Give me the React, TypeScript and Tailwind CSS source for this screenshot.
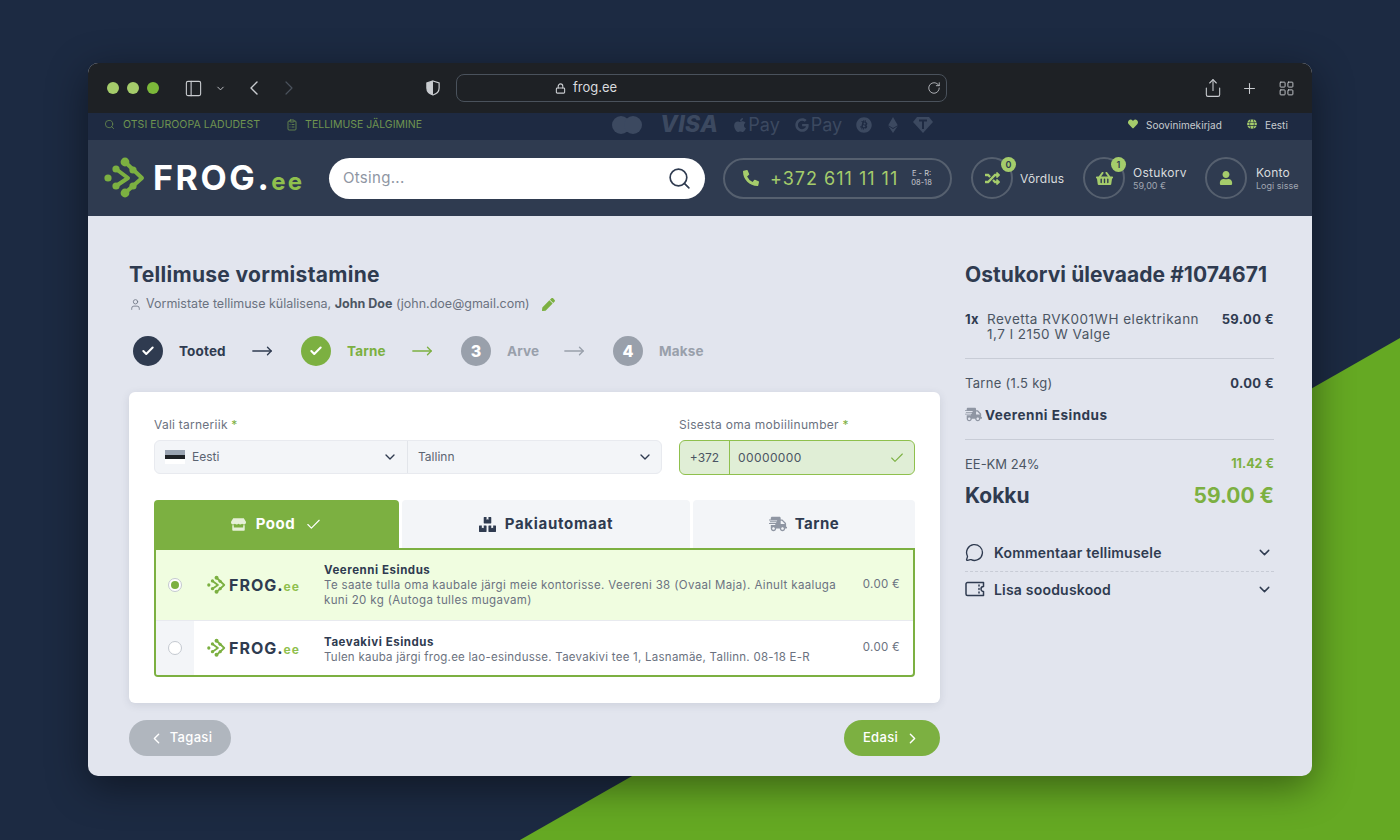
import { Check, ChevronDown, ChevronLeft, ChevronRight, ClipboardList, Lock, MessageCircle, MoveRight, PanelLeft, Plus, RotateCw, Search, Share, User, LayoutGrid } from "lucide-react";
import { FaBitcoin, FaBoxes, FaEthereum, FaGoogle, FaApple, FaHeart, FaPen, FaPhoneAlt, FaRandom, FaShippingFast, FaShoppingBasket, FaStore, FaUser, FaGlobe } from "react-icons/fa";

function LogoMark({ className }: { className: string }) {
  return (
    <svg viewBox="0 0 44 44" className={className} fill="none" stroke="#7cb041" strokeLinecap="round" strokeLinejoin="round">
      <circle cx="4" cy="22" r="3.6" fill="#7cb041" stroke="none" />
      <path d="M12 13 L24 22 L12 30" strokeWidth="4" />
      <path d="M21 6 L38 22 L21 37" strokeWidth="4" />
      <circle cx="12" cy="13" r="3.6" fill="#7cb041" stroke="none" />
      <circle cx="12" cy="30" r="3.6" fill="#7cb041" stroke="none" />
      <circle cx="21" cy="6" r="4.4" fill="#7cb041" stroke="none" />
      <circle cx="21" cy="37" r="4.4" fill="#7cb041" stroke="none" />
      <circle cx="29" cy="14" r="3.6" fill="#7cb041" stroke="none" />
      <circle cx="29" cy="30" r="3.6" fill="#7cb041" stroke="none" />
    </svg>
  );
}

function SmallLogo() {
  return (
    <div className="flex items-center">
      <LogoMark className="w-[20px] h-[20px]" />
      <span className="ml-[2px] text-[16px] leading-none font-bold tracking-[1px] text-[#2f3b50]">FROG.</span>
      <span className="text-[12px] leading-none font-bold tracking-[1px] text-[#8fc04d] mt-[3px]">ee</span>
    </div>
  );
}

function Step({ n, label, state, textWidth, showArrow }: { n: string; label: string; state: "done" | "active" | "todo"; textWidth: string; showArrow: boolean }) {
  const circle = state === "done" ? "bg-[#2f3b50]" : state === "active" ? "bg-[#7cb041]" : "bg-[#99a0ab]";
  const text = state === "done" ? "text-[#2f3b50]" : state === "active" ? "text-[#7cb041]" : "text-[#99a0ab]";
  return (
    <div className="flex items-center">
      <div className={`w-[30px] h-[30px] rounded-full flex items-center justify-center text-white text-[16px] font-extrabold ${circle}`}>
        {state === "todo" ? n : <Check size={14} strokeWidth={3.5} />}
      </div>
      <span className={`ml-4 text-[13.5px] tracking-[0.15px] font-bold whitespace-nowrap ${textWidth} ${text}`}>{label}</span>
      {showArrow && <MoveRight size={22} strokeWidth={1.5} className={`ml-[23px] mr-[28px] ${text}`} />}
    </div>
  );
}

export default function App() {
  return (
    <div className="relative w-[1400px] h-[840px] overflow-hidden bg-[#1c2a42] pt-[63px] px-[88px] [font-family:Inter,sans-serif]">
      {/* green corner behind the window */}
      <svg className="absolute inset-0 w-[1400px] h-[840px]" viewBox="0 0 1400 840">
        <polygon points="1400,338 1400,840 520,840" fill="#65a923" />
      </svg>

      <div className="relative h-[713px] rounded-[10px] overflow-hidden bg-[#e2e5ee] shadow-[0_10px_40px_rgba(0,0,0,0.45)]">
        {/* browser bar */}
        <div className="h-[50px] bg-[#1e2125] flex items-center text-[#c9ccd0] relative">
          <div className="flex items-center gap-2 ml-[19px]">
            <span className="w-3 h-3 rounded-full bg-[#a5cc6b]" />
            <span className="w-3 h-3 rounded-full bg-[#a5cc6b]" />
            <span className="w-3 h-3 rounded-full bg-[#7cb83a]" />
          </div>
          <PanelLeft size={19} strokeWidth={1.4} className="ml-[25px]" />
          <ChevronDown size={11} strokeWidth={2} className="ml-[12px]" />
          <ChevronLeft size={24} strokeWidth={1.4} className="ml-[16px]" />
          <ChevronRight size={24} strokeWidth={1.2} className="ml-[11px] text-[#4a525c]" />
          <svg viewBox="0 0 16 18" className="w-[14px] h-[16px] ml-[125px]">
            <path d="M8 1 L15 3.2 V9 C15 13 12 15.8 8 17 C4 15.8 1 13 1 9 V3.2 Z" fill="none" stroke="#c9ccd0" strokeWidth="1.4" />
            <path d="M8 1 L1 3.2 V9 C1 13 4 15.8 8 17 Z" fill="#c9ccd0" />
          </svg>
          <div className="ml-[16px] w-[491px] h-[28px] rounded-[8px] border border-[#4a525c] flex items-center pl-[98px] relative">
            <Lock size={11} strokeWidth={2.4} className="mr-[7px]" />
            <span className="text-[13px] text-[#d9dbde]">frog.ee</span>
            <RotateCw size={14} strokeWidth={1.4} className="absolute right-[5px] top-[6px]" />
          </div>
          <Share size={20} strokeWidth={1.3} className="ml-[256px]" />
          <Plus size={17} strokeWidth={1.5} className="ml-[18px]" />
          <LayoutGrid size={17} strokeWidth={1.3} className="ml-[20px]" />
        </div>

        {/* top strip */}
        <div className="h-[27px] bg-[#1e2a42] flex items-center pl-[16px] pb-[4px] text-[10.5px] text-[#6f9450] relative">
          <Search size={11} strokeWidth={1.6} />
          <span className="ml-[8px] tracking-[0.05px]">OTSI EUROOPA LADUDEST</span>
          <ClipboardList size={12} strokeWidth={1.6} className="ml-[26px]" />
          <span className="ml-[7px]">TELLIMUSE JÄLGIMINE</span>
          <div className="flex items-center text-[#3c4960] ml-[190px]">
            <div className="flex w-[30px]">
              <span className="w-[18px] h-[18px] rounded-full bg-[#3c4960]" />
              <span className="w-[18px] h-[18px] rounded-full bg-[#3c4960] -ml-[6px]" />
            </div>
            <span className="ml-[18px] text-[23px] tracking-[0.4px] font-extrabold italic leading-none">VISA</span>
            <FaApple size={16} className="ml-[14px]" />
            <span className="text-[18px] leading-none">Pay</span>
            <FaGoogle size={14} className="ml-[15px]" />
            <span className="ml-[2px] text-[18px] leading-none">Pay</span>
            <FaBitcoin size={16} className="ml-[14px]" />
            <FaEthereum size={16} className="ml-[13px]" />
            <svg viewBox="0 0 20 18" className="w-[20px] h-[18px] ml-[12px]">
              <path d="M4 1 H16 L20 6 L10 17 L0 6 Z" fill="#3c4960" />
              <path d="M6 4.5 H14 M10 4.5 V13" stroke="#1e2a42" strokeWidth="2" />
            </svg>
          </div>
          <FaHeart size={10} className="absolute left-[1040px] top-[6px] text-[#a5cc6b]" />
          <span className="absolute left-[1058px] top-[5px] text-[10px] tracking-[0.05px] text-[#c9ccd0]">Soovinimekirjad</span>
          <FaGlobe size={10} className="absolute left-[1159px] top-[6px] text-[#a5cc6b]" />
          <span className="absolute left-[1177px] top-[5px] text-[10px] text-[#c9ccd0]">Eesti</span>
        </div>

        {/* site header */}
        <div className="h-[76px] bg-[#2f3b50] flex items-center pl-[16px]">
          <div className="w-[225px] flex items-center">
            <LogoMark className="w-[44px] h-[44px]" />
            <span className="ml-[5px] text-[34px] leading-none font-bold tracking-[2.6px] text-white">FROG.</span>
            <span className="text-[24px] leading-none font-bold tracking-[2px] text-[#8fc04d] mt-[7px]">ee</span>
          </div>
          <div className="w-[376px] h-[41px] rounded-full bg-white flex items-center justify-between pl-[14px] pr-[13px]">
            <span className="text-[15px] tracking-[0.3px] pt-px text-[#8f96a3]">Otsing...</span>
            <Search size={25} strokeWidth={1.6} className="text-[#2f3b50]" />
          </div>
          <div className="ml-[18px] w-[229px] h-[41px] rounded-full border-2 border-[#56606f] flex items-center pl-[18px]">
            <FaPhoneAlt size={16} className="text-[#a5cc6b]" />
            <span className="ml-[11px] text-[18px] tracking-[1px] pt-px text-[#a5cc6b]">+372 611 11 11</span>
            <span className="ml-[13px] text-[7.5px] leading-[9px] text-center text-[#c9ccd0]">E - R:<br />08-18</span>
          </div>
          <div className="ml-[19px] relative w-[42px] h-[42px] rounded-full border-2 border-[#56606f] flex items-center justify-center text-[#a5cc6b]">
            <FaRandom size={15} />
            <span className="absolute -top-[2px] -right-[5px] w-[15px] h-[15px] rounded-full bg-[#a5cc6b] text-[#2f3b50] text-[9px] font-semibold flex items-center justify-center">0</span>
          </div>
          <span className="ml-[7px] w-[63px] text-[12px] tracking-[0.2px] pt-px text-[#d9dbde]">Võrdlus</span>
          <div className="relative w-[42px] h-[42px] rounded-full border-2 border-[#56606f] flex items-center justify-center text-[#a5cc6b]">
            <FaShoppingBasket size={17} />
            <span className="absolute -top-[2px] right-[-3px] w-[15px] h-[15px] rounded-full bg-[#a5cc6b] text-[#2f3b50] text-[9px] font-semibold flex items-center justify-center">1</span>
          </div>
          <div className="ml-[8px] w-[72px] flex flex-col">
            <span className="text-[12px] leading-[14px] tracking-[0.3px] text-[#d9dbde]">Ostukorv</span>
            <span className="text-[9px] leading-[11px] text-[#a0a6b0]">59,00 €</span>
          </div>
          <div className="w-[42px] h-[42px] rounded-full border-2 border-[#56606f] flex items-center justify-center text-[#a5cc6b]">
            <FaUser size={14} />
          </div>
          <div className="ml-[9px] flex flex-col pt-px">
            <span className="text-[12px] leading-[14px] tracking-[0.2px] text-[#d9dbde]">Konto</span>
            <span className="text-[9px] leading-[11px] text-[#a0a6b0]">Logi sisse</span>
          </div>
        </div>

        {/* page body */}
        <div className="flex pl-[41px] pt-[46px]">
          <div className="w-[811px]">
            <h1 className="text-[21px] leading-[26px] tracking-[0.3px] font-bold text-[#2f3b50]">Tellimuse vormistamine</h1>
            <div className="mt-[8px] flex items-center text-[12.5px] leading-[16px] text-[#6b7280]">
              <User size={13} strokeWidth={1.5} className="mr-[4px]" />
              <span>Vormistate tellimuse külalisena, <b className="font-bold text-[#4b5563]">John Doe</b> (john.doe@gmail.com)</span>
              <FaPen size={13} className="ml-[12px] text-[#7cb041]" />
            </div>

            <div className="mt-[24px] pl-[4px] flex items-center h-[30px]">
              <Step n="1" label="Tooted" state="done" textWidth="w-[49px]" showArrow />
              <Step n="2" label="Tarne" state="active" textWidth="w-[41px]" showArrow />
              <Step n="3" label="Arve" state="todo" textWidth="w-[33px]" showArrow />
              <Step n="4" label="Makse" state="todo" textWidth="w-[46px]" showArrow={false} />
            </div>

            <div className="mt-[26px] h-[311px] rounded-[6px] bg-white shadow-[0_2px_8px_rgba(47,59,80,0.12)] px-[25px] pt-[25px]">
              <div className="flex gap-[17px]">
                <div className="w-[508px]">
                  <div className="text-[12px] leading-[15px] tracking-[0.25px] text-[#6b7280]">Vali tarneriik <span className="text-[#7cb041]">*</span></div>
                  <div className="mt-[8px] h-[34px] rounded-[6px] border border-[#e8eaef] bg-[#f3f5f8] flex items-center text-[12px] text-[#5b6472]">
                    <div className="w-[253px] h-full border-r border-[#e2e5ea] flex items-center pl-[10px] pr-[9px]">
                      <div className="w-[20px] h-[14px] flex flex-col mr-[7px]">
                        <span className="h-1/3 bg-[#9aa4b2]" />
                        <span className="h-1/3 bg-[#1e2125]" />
                        <span className="h-1/3 bg-white" />
                      </div>
                      <span>Eesti</span>
                      <ChevronDown size={16} strokeWidth={2} className="ml-auto text-[#2f3b50]" />
                    </div>
                    <div className="flex-1 flex items-center pl-[10px] pr-[8px]">
                      <span>Tallinn</span>
                      <ChevronDown size={16} strokeWidth={2} className="ml-auto text-[#2f3b50]" />
                    </div>
                  </div>
                </div>
                <div className="w-[236px]">
                  <div className="text-[12px] leading-[15px] tracking-[0.3px] text-[#6b7280]">Sisesta oma mobiilinumber <span className="text-[#7cb041]">*</span></div>
                  <div className="mt-[8px] h-[35px] rounded-[6px] border border-[#8fc04d] bg-[#e0eed6] flex items-center text-[12px] text-[#4b5563]">
                    <span className="w-[50px] h-full border-r border-[#8fc04d] flex items-center justify-center">+372</span>
                    <span className="ml-[8px] tracking-[0.4px]">00000000</span>
                    <Check size={16} strokeWidth={1.6} className="ml-auto mr-[9px] text-[#7cb041]" />
                  </div>
                </div>
              </div>

              <div className="mt-[25px] flex gap-[3px] h-[48px]">
                <div className="w-[245px] rounded-t-[4px] bg-[#7cb041] flex items-center justify-center text-white text-[15px] tracking-[0.5px] font-bold">
                  <FaStore size={15} className="mr-[10px] text-[#e6f0d8]" />
                  Pood
                  <Check size={17} strokeWidth={1.6} className="ml-[10px]" />
                </div>
                <div className="w-[288px] rounded-t-[4px] bg-[#f3f5f8] flex items-center justify-center text-[#2f3b50] text-[15px] tracking-[0.7px] font-bold">
                  <FaBoxes size={17} className="mr-[9px]" />
                  Pakiautomaat
                </div>
                <div className="w-[222px] rounded-t-[4px] bg-[#f3f5f8] flex items-center justify-center text-[#2f3b50] text-[15px] tracking-[0.5px] font-bold">
                  <FaShippingFast size={18} className="mr-[8px] text-[#8f96a3]" />
                  Tarne
                </div>
              </div>

              <div className="h-[129px] border-2 border-[#7cb041] rounded-b-[4px] overflow-hidden">
                <div className="h-[71px] bg-[#f0fde0] flex border-b border-[#e8eaef]">
                  <div className="w-[38px] flex items-center justify-center">
                    <span className="w-[14px] h-[14px] rounded-full border border-[#c4c9d0] bg-white flex items-center justify-center">
                      <span className="w-[8px] h-[8px] rounded-full bg-[#7cb041]" />
                    </span>
                  </div>
                  <div className="w-[130px] pl-[13px] flex items-center"><SmallLogo /></div>
                  <div className="w-[520px] pt-[13px] text-[11.5px] leading-[15px] tracking-[0.36px] text-[#6b7280]">
                    <div className="font-bold tracking-[0.55px] text-[#2f3b50]">Veerenni Esindus</div>
                    Te saate tulla oma kaubale järgi meie kontorisse. Veereni 38 (Ovaal Maja). Ainult kaaluga<br />kuni 20 kg (Autoga tulles mugavam)
                  </div>
                  <div className="flex-1 flex items-center justify-end pr-[13px] text-[11.5px] tracking-[0.3px] text-[#6b7280]">0.00 €</div>
                </div>
                <div className="h-[54px] flex">
                  <div className="w-[38px] bg-[#f3f5f8] flex items-center justify-center">
                    <span className="w-[14px] h-[14px] rounded-full border border-[#c4c9d0] bg-white" />
                  </div>
                  <div className="w-[130px] pl-[13px] flex items-center"><SmallLogo /></div>
                  <div className="w-[520px] pt-[14px] text-[11.5px] leading-[15px] tracking-[0.25px] text-[#6b7280]">
                    <div className="font-bold tracking-[0.55px] text-[#2f3b50]">Taevakivi Esindus</div>
                    Tulen kauba järgi frog.ee lao-esindusse. Taevakivi tee 1, Lasnamäe, Tallinn. 08-18 E-R
                  </div>
                  <div className="flex-1 flex items-center justify-end pr-[13px] text-[11.5px] tracking-[0.3px] text-[#6b7280]">0.00 €</div>
                </div>
              </div>
            </div>

            <div className="mt-[17px] flex justify-between">
              <div className="w-[102px] h-[36px] rounded-full bg-[#b0b6be] flex items-center justify-center text-white text-[13px] tracking-[0.3px] font-medium">
                <ChevronLeft size={17} strokeWidth={2} className="mr-[5px]" />Tagasi
              </div>
              <div className="w-[96px] h-[36px] rounded-full bg-[#7cb041] flex items-center justify-center text-white text-[13px] tracking-[0.3px] font-medium">
                Edasi<ChevronRight size={17} strokeWidth={2} className="ml-[6px]" />
              </div>
            </div>
          </div>

          <div className="ml-[25px] w-[309px] text-[#2f3b50]">
            <h2 className="text-[21px] leading-[26px] tracking-[0.07px] font-bold whitespace-nowrap">Ostukorvi ülevaade #1074671</h2>
            <div className="mt-[24px] flex text-[13px] leading-[15px] tracking-[0.35px]">
              <b className="w-[22px] font-bold">1x</b>
              <span className="text-[13.5px] tracking-[0.5px] text-[#4b5563]">Revetta RVK001WH elektrikann<br />1,7 l 2150 W Valge</span>
              <b className="ml-auto font-bold">59.00 €</b>
            </div>
            <div className="mt-[16px] border-t border-[#c8ccd6]" />
            <div className="mt-[16px] flex justify-between text-[13px] leading-[16px] tracking-[0.3px]">
              <span className="text-[#4b5563]">Tarne (1.5 kg)</span>
              <b className="font-bold">0.00 €</b>
            </div>
            <div className="mt-[15px] flex items-center text-[13.5px] leading-[16px] tracking-[0.5px] font-bold">
              <FaShippingFast size={17} className="mr-[3px] text-[#8f96a3]" />Veerenni Esindus
            </div>
            <div className="mt-[16px] border-t border-[#c8ccd6]" />
            <div className="mt-[16px] flex justify-between items-center text-[13px] leading-[16px]">
              <span className="text-[#4b5563]">EE-KM 24%</span>
              <b className="text-[12.5px] font-bold text-[#7cb041]">11.42 €</b>
            </div>
            <div className="mt-[10px] flex justify-between items-center text-[21px] leading-[28px] font-bold">
              <span>Kokku</span>
              <span className="text-[#7cb041]">59.00 €</span>
            </div>
            <div className="mt-[24px] h-[38px] flex items-center border-b border-dashed border-[#c8ccd6] text-[14px] tracking-[0.2px] font-semibold">
              <MessageCircle size={19} strokeWidth={1.7} className="mr-[10px]" />
              Kommentaar tellimusele
              <ChevronDown size={17} strokeWidth={2} className="ml-auto mr-[1px]" />
            </div>
            <div className="h-[34px] flex items-center text-[14px] tracking-[0.2px] font-semibold">
              <svg viewBox="0 0 20 16" className="w-[20px] h-[16px] mr-[9px]" fill="none" stroke="currentColor" strokeWidth="1.5" strokeLinecap="round" strokeLinejoin="round">
                <path d="M2.5 1.5 H18.5 V5.5 A2.5 2.5 0 0 0 18.5 10.5 V14.5 H2.5 A1.5 1.5 0 0 1 1 13 V3 A1.5 1.5 0 0 1 2.5 1.5 Z" />
                <path d="M14 4 V5 M14 7.5 V8.5 M14 11 V12" />
              </svg>
              Lisa sooduskood
              <ChevronDown size={17} strokeWidth={2} className="ml-auto mr-[1px]" />
            </div>
          </div>
        </div>
      </div>
    </div>
  );
}
